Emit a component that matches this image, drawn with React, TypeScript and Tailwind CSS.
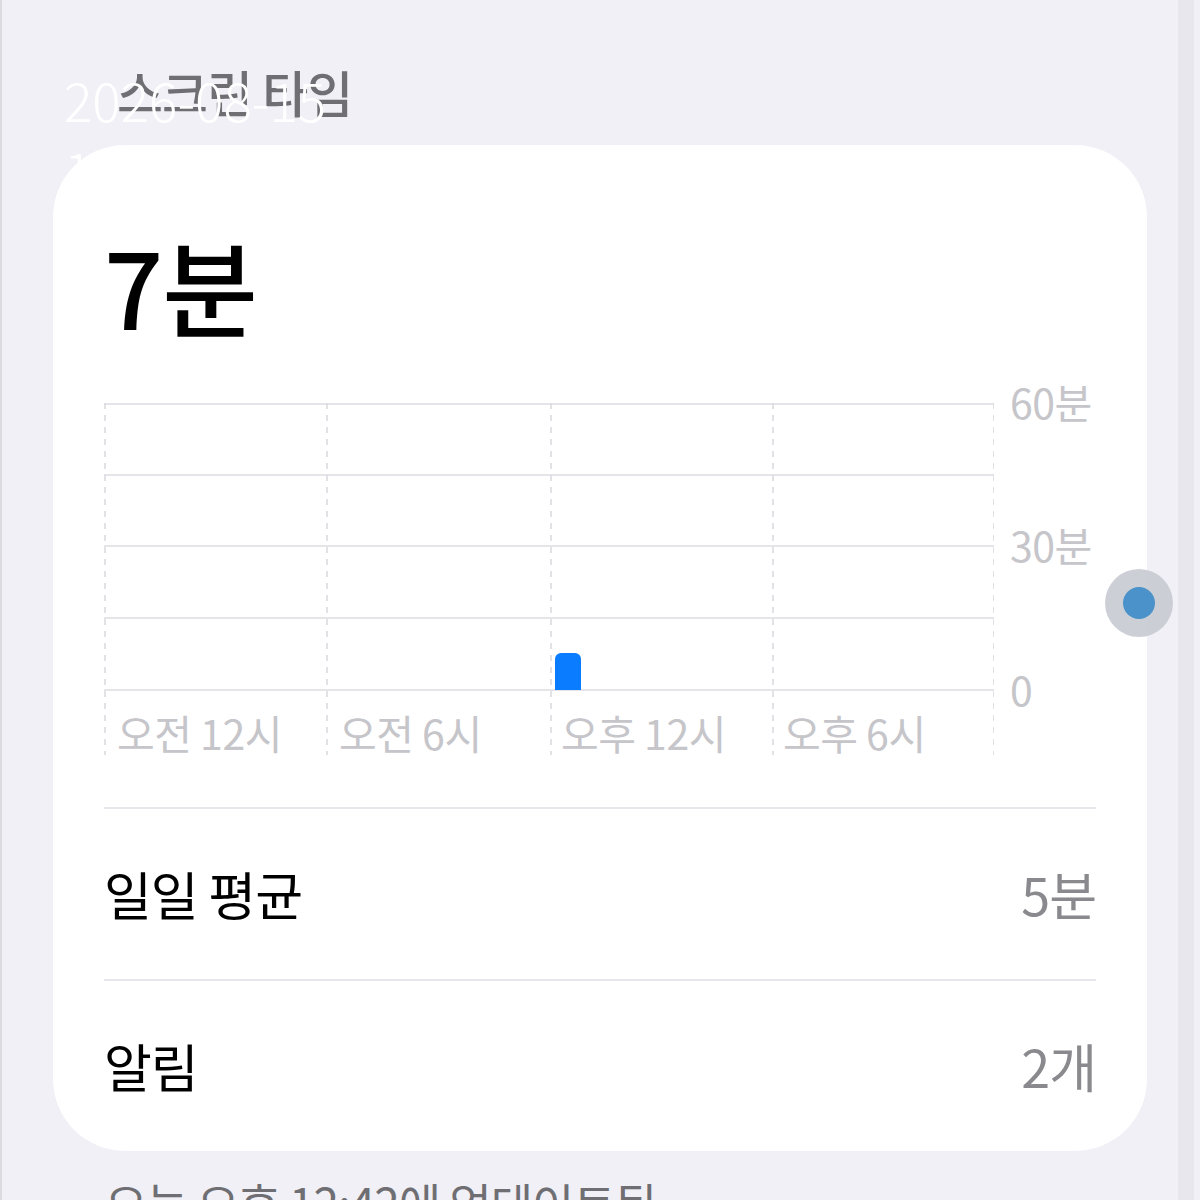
import React from "react";

const FONT = { fontFamily: '"Noto Sans CJK KR", "Noto Sans", sans-serif' };

const HOURS = ["오전 12시", "오전 6시", "오후 12시", "오후 6시"];
const Y_LABELS = [
  { label: "60분", top: -2 },
  { label: "30분", top: 141 },
  { label: "0", top: 285 },
];

function UsageChart() {
  const vx = [0, 222, 446, 668, 889];
  const hy = [1, 72, 143, 215, 287];
  return (
    <div className="flex">
      <div className="relative w-[890px] h-[352px]">
        <svg className="absolute inset-0" width="890" height="352" viewBox="0 0 890 352">
          {hy.map(y => (
            <line key={y} x1="0" x2="890" y1={y} y2={y} stroke="#e4e4e9" strokeWidth="2" />
          ))}
          {vx.map(x => (
            <line key={x} x1={x + 1} x2={x + 1} y1="0" y2="352" stroke="#d9d9de" strokeWidth="1.5" strokeDasharray="6 6" />
          ))}
          <path d="M451 287 V256 a6 6 0 0 1 6 -6 H471 a6 6 0 0 1 6 6 V287 Z" fill="#0a7cff" />
        </svg>
        <div className="absolute left-0 right-0 bottom-0 flex h-[46px] items-center">
          {HOURS.map(h => (
            <div key={h} className="w-[222px] pl-[13px] text-[41px] leading-none text-[#c5c5ca] tracking-[-0.5px]">
              {h}
            </div>
          ))}
        </div>
      </div>
      <div className="relative flex-1">
        {Y_LABELS.map(y => (
          <div
            key={y.label}
            className="absolute left-[16px] text-[41px] leading-none text-[#c5c5ca] -translate-y-1/2 tracking-[-0.5px]"
            style={{ top: y.top }}
          >
            {y.label}
          </div>
        ))}
      </div>
    </div>
  );
}

function StatRow({ label, value }: { label: string; value: string }) {
  return (
    <div className="flex h-[172px] items-center justify-between border-t-2 border-[#e6e6eb]">
      <span className="text-[52px] text-black tracking-[-1px]">{label}</span>
      <span className="text-[52px] text-[#8a8a8e] tracking-[-1px]">{value}</span>
    </div>
  );
}

export default function App() {
  return (
    <div className="relative w-[1200px] h-[1200px] overflow-hidden bg-[#f1f0f6]" style={FONT}>
      {/* left/right edges */}
      <div className="absolute left-0 top-0 h-full w-[2px] bg-[#dcdce0]" />
      <div className="absolute right-[6px] top-0 h-full w-[16px] bg-[#e8e7ed]" />

      <div className="pl-[117px] pt-[66px] h-[145px]">
        <h1 className="text-[50px] leading-none text-[#6e6e73] font-medium tracking-[-1px]">스크린 타임</h1>
      </div>

      <div className="ml-[53px] w-[1094px] h-[1006px] rounded-[72px] bg-white px-[51px] pt-[88px]">
        <div className="text-[104px] leading-none text-black font-medium tracking-[-1px]">7분</div>
        <div className="mt-[66px]">
          <UsageChart />
        </div>
        <div className="mt-[52px]">
          <StatRow label="일일 평균" value="5분" />
          <StatRow label="알림" value="2개" />
        </div>
      </div>

      <div className="pl-[105px] pt-[28px] text-[46px] leading-none text-[#6e6e73] tracking-[-1px]">
        오늘 오후 12:42에 업데이트됨
      </div>

      {/* timestamp overlay */}
      <div className="absolute left-[64px] top-[64px] text-[53px] leading-[70px] font-light text-white">
        <div>2026-08-15</div>
        <div>14:03</div>
      </div>

      {/* touch indicator */}
      <div className="absolute left-[1105px] top-[569px] flex h-[68px] w-[68px] items-center justify-center rounded-full bg-[#c6cbd1]/90">
        <div className="h-[32px] w-[32px] rounded-full bg-[#4a92c9]" />
      </div>
    </div>
  );
}
